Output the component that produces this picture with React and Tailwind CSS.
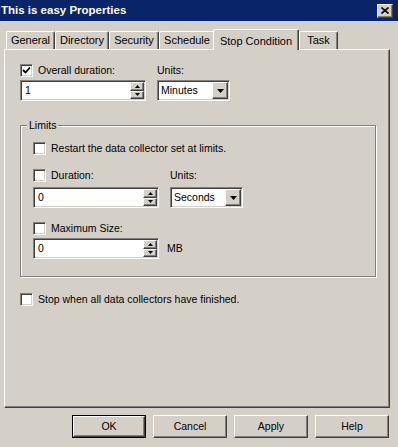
import React from "react";

const sunken =
  "border border-t-[#808080] border-l-[#808080] border-r-white border-b-white shadow-[inset_1px_1px_0_#404040,inset_-1px_-1px_0_#d4d0c8]";
const raised =
  "border border-t-white border-l-white border-r-[#404040] border-b-[#404040] shadow-[inset_-1px_-1px_0_#808080]";

function Check({ checked }) {
  return (
    <span className={`flex items-center justify-center w-[13px] h-[13px] shrink-0 bg-white ${sunken}`}>
      {checked && (
        <svg width="9" height="9" viewBox="0 0 9 9">
          <polyline points="1,4 3.5,6.5 8,1.5" fill="none" stroke="#000" strokeWidth="1.8" />
        </svg>
      )}
    </span>
  );
}

function CheckRow({ checked, label, className = "" }) {
  return (
    <div className={`flex items-center h-[15px] gap-[5px] ${className}`}>
      <Check checked={checked} />
      <span>{label}</span>
    </div>
  );
}

function SpinBox({ value }) {
  return (
    <div className={`flex h-[21px] w-[126px] ${sunken} bg-[#d4d0c8]`}>
      <div className="flex-1 bg-white flex items-center pl-[3px] my-[1px] ml-[1px]">{value}</div>
      <div className="flex flex-col w-[14px] my-[1px] mr-[1px]">
        <button className={`flex-1 flex items-center justify-center bg-[#d4d0c8] ${raised}`}>
          <svg width="5" height="3" viewBox="0 0 5 3">
            <polygon points="2.5,0 5,3 0,3" fill="#000" />
          </svg>
        </button>
        <button className={`flex-1 flex items-center justify-center bg-[#d4d0c8] ${raised}`}>
          <svg width="5" height="3" viewBox="0 0 5 3">
            <polygon points="0,0 5,0 2.5,3" fill="#000" />
          </svg>
        </button>
      </div>
    </div>
  );
}

function Select({ value }) {
  return (
    <div className={`flex h-[21px] w-[73px] bg-white ${sunken}`}>
      <div className="flex-1 flex items-center pl-[3px]">{value}</div>
      <button className={`w-[16px] my-[1px] mr-[1px] flex items-center justify-center bg-[#d4d0c8] ${raised}`}>
        <svg width="7" height="4" viewBox="0 0 7 4">
          <polygon points="0,0 7,0 3.5,4" fill="#000" />
        </svg>
      </button>
    </div>
  );
}

const tabs = [
  { name: "General", w: "w-[49px]" },
  { name: "Directory", w: "w-[54px]" },
  { name: "Security", w: "w-[50px]" },
  { name: "Schedule", w: "w-[56px]" },
  { name: "Stop Condition", w: "w-[86px]", active: true },
  { name: "Task", w: "w-[39px]" },
];

export default function App() {
  return (
    <div className="w-[398px] h-[447px] bg-[#d4d0c8] flex flex-col text-[10.5px] text-black font-['Liberation_Sans',Arial,sans-serif] overflow-hidden">
      {/* Title bar */}
      <div className="h-[21px] bg-[#0a246a] flex items-center justify-between pl-[1px] pr-[5px] shrink-0">
        <span className="text-white font-bold text-[11.5px]">This is easy Properties</span>
        <button className={`w-[16px] h-[14px] bg-[#d4d0c8] flex items-center justify-center ${raised}`}>
          <svg width="8" height="7" viewBox="0 0 8 7">
            <path d="M0.5 0.5 L7.5 6.5 M7.5 0.5 L0.5 6.5" stroke="#000" strokeWidth="1.6" />
          </svg>
        </button>
      </div>

      {/* Tabs */}
      <div className="mt-[8px] h-[20px] flex items-end pl-[6px] shrink-0 text-[11px]">
        {tabs.map((t) =>
          t.active ? (
            <div
              key={t.name}
              className={`${t.w} ml-[-2px] h-[21px] mb-[-1px] relative z-10 bg-[#d4d0c8] flex items-start pt-[3px] justify-center rounded-t-[2px] border-t border-l border-r border-t-white border-l-white border-r-[#404040] shadow-[inset_-1px_0_0_#808080]`}
            >
              {t.name}
            </div>
          ) : (
            <div
              key={t.name}
              className={`${t.w} h-[18px] flex items-center justify-center rounded-t-[2px] border-t border-l border-r border-t-white border-l-white border-r-[#404040] shadow-[inset_-1px_0_0_#808080]`}
            >
              {t.name}
            </div>
          )
        )}
      </div>

      {/* Panel */}
      <div className="ml-[4px] w-[386px] h-[359px] shrink-0 border border-t-white border-l-white border-r-[#404040] border-b-[#404040] shadow-[inset_-1px_-1px_0_#808080] pl-[15px] flex flex-col">
        <div className="mt-[13px] flex">
          <div className="w-[126px]">
            <CheckRow checked label="Overall duration:" />
            <div className="mt-[2px]">
              <SpinBox value="1" />
            </div>
          </div>
          <div className="ml-[11px]">
            <div className="h-[15px] flex items-center">Units:</div>
            <div className="mt-[2px]">
              <Select value="Minutes" />
            </div>
          </div>
        </div>

        {/* Limits group */}
        <div className="relative mt-[24px] w-[356px] h-[152px] border border-[#808080] shadow-[inset_1px_1px_0_#fff,1px_1px_0_#fff] pl-[12px] flex flex-col">
          <span className="absolute top-[-8px] left-[6px] px-[2px] bg-[#d4d0c8]">Limits</span>
          <CheckRow label="Restart the data collector set at limits." className="mt-[15px]" />
          <div className="mt-[12px] flex">
            <div className="w-[126px]">
              <CheckRow label="Duration:" />
              <div className="mt-[4px]">
                <SpinBox value="0" />
              </div>
            </div>
            <div className="ml-[11px]">
              <div className="h-[15px] flex items-center">Units:</div>
              <div className="mt-[4px]">
                <Select value="Seconds" />
              </div>
            </div>
          </div>
          <CheckRow label="Maximum Size:" className="mt-[13px]" />
          <div className="mt-[2px] flex items-center">
            <SpinBox value="0" />
            <span className="ml-[8px]">MB</span>
          </div>
        </div>

        <CheckRow label="Stop when all data collectors have finished." className="mt-[15px]" />
      </div>

      {/* Buttons */}
      <div className="mt-[7px] flex justify-end gap-[7px] pr-[9px]">
        <button className="w-[74px] h-[23px] border border-black bg-[#d4d0c8]">
          <div className={`w-full h-full flex items-center justify-center ${raised}`}>OK</div>
        </button>
        {["Cancel", "Apply", "Help"].map((b) => (
          <button key={b} className={`w-[74px] h-[23px] flex items-center justify-center bg-[#d4d0c8] ${raised}`}>
            {b}
          </button>
        ))}
      </div>
    </div>
  );
}
